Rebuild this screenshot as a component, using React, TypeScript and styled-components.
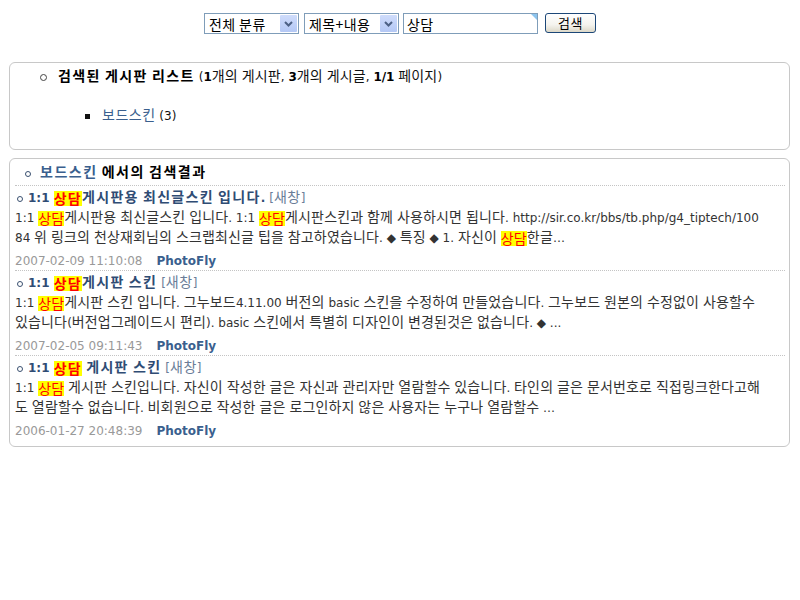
import React from 'react';
import styled, { createGlobalStyle } from 'styled-components';

const KEYWORD = '상담';

type Post = Readonly<{
    title: string;
    body: string;
    date: string;
    author: string;
}>;

const posts: Post[] = [
    {
        title: '1:1 상담게시판용 최신글스킨 입니다.',
        body:
            '1:1 상담게시판용 최신글스킨 입니다. 1:1 상담게시판스킨과 함께 사용하시면 됩니다. http://sir.co.kr/bbs/tb.php/g4_tiptech/10084 위 링크의 천상재회님의 스크랩최신글 팁을 참고하였습니다. ◆ 특징 ◆ 1. 자신이 상담한글…',
        date: '2007-02-09 11:10:08',
        author: 'PhotoFly',
    },
    {
        title: '1:1 상담게시판 스킨',
        body:
            '1:1 상담게시판 스킨 입니다. 그누보드4.11.00 버전의 basic 스킨을 수정하여 만들었습니다. 그누보드 원본의 수정없이 사용할수 있습니다(버전업그레이드시 편리). basic 스킨에서 특별히 디자인이 변경된것은 없습니다. ◆ ...',
        date: '2007-02-05 09:11:43',
        author: 'PhotoFly',
    },
    {
        title: '1:1 상담 게시판 스킨',
        body:
            '1:1 상담 게시판 스킨입니다. 자신이 작성한 글은 자신과 관리자만 열람할수 있습니다. 타인의 글은 문서번호로 직접링크한다고해도 열람할수 없습니다. 비회원으로 작성한 글은 로그인하지 않은 사용자는 누구나 열람할수 …',
        date: '2006-01-27 20:48:39',
        author: 'PhotoFly',
    },
];

const GlobalStyle = createGlobalStyle`
    body {
        margin: 8px;
        background: #fff;
        color: #333;
        font: 12px "DejaVu Sans", "Noto Sans CJK KR", sans-serif;
    }
`;

// hangul runs are set a size up, like the old Dotum/Tahoma pairing
const Hangul = styled.span`
    font-family: "Noto Sans CJK KR", sans-serif;
    font-size: 14px;
    line-height: 1;
    letter-spacing: 0.15px;
`;

const ko = (text: string) =>
    text.split(/([가-힣]+)/).map((part, i) =>
        i % 2 ? <Hangul key={i}>{part}</Hangul> : <React.Fragment key={i}>{part}</React.Fragment>,
    );

const SearchForm = styled.form`
    display: flex;
    justify-content: center;
    align-items: flex-start;
    margin: 5px 0 28px;
    height: 21px;
`;

const SelectWrap = styled.div<{ $gap: number }>`
    position: relative;
    width: 95px;
    height: 21px;
    margin-right: ${(p) => p.$gap}px;
    border: 1px solid #7f9db9;
    box-sizing: border-box;
    background: #fff;

    select {
        appearance: none;
        border: 0;
        outline: 0;
        width: 100%;
        height: 100%;
        padding: 0 0 0 4px;
        background: transparent;
        font: 14px "Noto Sans CJK KR", sans-serif;
        letter-spacing: 0.4px;
        color: #000;
    }
`;

const SelectArrow = styled.span`
    position: absolute;
    top: 1px;
    right: 1px;
    width: 17px;
    height: 17px;
    border-radius: 1px;
    background: linear-gradient(#cfdcfb, #b4c8f5);
    display: flex;
    align-items: center;
    justify-content: center;
    pointer-events: none;
`;

const InputWrap = styled.div`
    position: relative;
    width: 135px;
    height: 21px;
    margin-right: 7px;

    input {
        width: 100%;
        height: 100%;
        box-sizing: border-box;
        border: 1px solid #7f9db9;
        outline: 0;
        padding: 0 3px;
        font: 14px "Noto Sans CJK KR", sans-serif;
        letter-spacing: 0.4px;
        color: #000;
    }

    &::after {
        content: '';
        position: absolute;
        top: 1px;
        right: 1px;
        border-top: 6px solid #8cc4ee;
        border-left: 6px solid transparent;
    }
`;

const SearchButton = styled.button`
    width: 51px;
    height: 20px;
    padding: 0;
    border: 1px solid #1c4778;
    border-radius: 3px;
    background: linear-gradient(#ffffff, #f4f3ee 60%, #dcd8c8);
    font: 13px "Noto Sans CJK KR", sans-serif;
    letter-spacing: 0.5px;
    color: #000;
    line-height: 16px;
`;

const Panel = styled.div`
    margin: 0 2px 0 1px;
    border: 1px solid #c8c8c8;
    border-radius: 6px;
`;

const BoardPanel = styled(Panel)`
    padding: 4px 0 23px;
`;

const ResultPanel = styled(Panel)`
    margin-top: 8px;
    padding: 0 4px 6px 5px;
`;

const BoardList = styled.ul`
    margin: 0;
    padding: 0;
    list-style: none;
`;

const BoardHeading = styled.li`
    position: relative;
    padding-left: 48px;
    line-height: 20px;
    color: #111;

    b {
        color: #000;
    }

    b ${Hangul} {
        letter-spacing: 1.4px;
    }

    &::before {
        content: '';
        position: absolute;
        left: 30px;
        top: 7px;
        width: 5px;
        height: 5px;
        border: 1px solid #444;
        border-radius: 50%;
    }
`;

const BoardSubList = styled.ul`
    margin: 19px 0 0;
    padding: 0;
    list-style: none;
`;

const BoardItem = styled.li`
    position: relative;
    padding-left: 44px;
    line-height: 20px;

    &::before {
        content: '';
        position: absolute;
        left: 27px;
        top: 8px;
        width: 5px;
        height: 5px;
        background: #111;
    }
`;

const BoardLink = styled.a`
    color: #3a5f8e;
    text-decoration: none;

    ${Hangul} {
        letter-spacing: 0.5px;
    }
`;

const ResultHeading = styled.div`
    position: relative;
    padding: 4px 0 2px 25px;
    line-height: 20px;
    font-weight: bold;
    color: #000;
    border-bottom: 1px dotted #c4c4c4;

    ${Hangul} {
        letter-spacing: 1.5px;
    }

    &::before {
        content: '';
        position: absolute;
        left: 10px;
        top: 12px;
        width: 4px;
        height: 4px;
        border: 1px solid #3a5070;
        border-radius: 50%;
    }
`;

const BoardName = styled.span`
    color: #3a5f8e;
`;

const PostItem = styled.div`
    padding-top: 2px;
    border-bottom: 1px dotted #c4c4c4;

    &:last-child {
        border-bottom: 0;
    }
`;

const PostTitle = styled.div`
    position: relative;
    padding-left: 13px;
    line-height: 20px;

    &::before {
        content: '';
        position: absolute;
        left: 2px;
        top: 8px;
        width: 4px;
        height: 4px;
        border: 1px solid #3a5070;
        border-radius: 50%;
    }
`;

const TitleLink = styled.a`
    color: #2f4c74;
    font-weight: bold;
    text-decoration: none;

    ${Hangul} {
        letter-spacing: 1.3px;
    }
`;

const NewWindow = styled.a`
    margin-left: 4px;
    color: #6a7d98;
    text-decoration: none;

    ${Hangul} {
        letter-spacing: 0.5px;
    }
`;

const PostBody = styled.div`
    padding-right: 21px;
    line-height: 20px;
    color: #333;
    word-break: break-all;
`;

const Mark = styled.span`
    display: inline-block;
    height: 15px;
    line-height: 15px;
    vertical-align: -2px;
    background: #ffff00;
    color: #ff0000;
`;

const PostMeta = styled.div`
    margin-top: 4px;
    line-height: 18px;
`;

const PostDate = styled.span`
    color: #999;
`;

const PostAuthor = styled.span`
    margin-left: 14px;
    font-weight: bold;
    color: #3a5f8e;
`;

const highlight = (text: string) =>
    text.split(KEYWORD).map((part, i) => (
        <React.Fragment key={i}>
            {i > 0 && <Mark>{ko(KEYWORD)}</Mark>}
            {ko(part)}
        </React.Fragment>
    ));

const ChevronIcon = () => (
    <svg width="9" height="6" viewBox="0 0 9 6">
        <path d="M1 1 L4.5 4.5 L8 1" fill="none" stroke="#4d6185" strokeWidth="2" />
    </svg>
);

const App: React.FC = () => (
    <>
        <GlobalStyle />
        <SearchForm onSubmit={(e) => e.preventDefault()}>
            <SelectWrap $gap={5}>
                <select defaultValue="all">
                    <option value="all">전체 분류</option>
                </select>
                <SelectArrow>
                    <ChevronIcon />
                </SelectArrow>
            </SelectWrap>
            <SelectWrap $gap={4}>
                <select defaultValue="sc">
                    <option value="sc">제목+내용</option>
                </select>
                <SelectArrow>
                    <ChevronIcon />
                </SelectArrow>
            </SelectWrap>
            <InputWrap>
                <input type="text" defaultValue={KEYWORD} />
            </InputWrap>
            <SearchButton type="submit">검색</SearchButton>
        </SearchForm>

        <BoardPanel>
            <BoardList>
                <BoardHeading>
                    <b>{ko('검색된 게시판 리스트')}</b> (<b>1</b>
                    {ko('개의 게시판, ')}
                    <b>3</b>
                    {ko('개의 게시글, ')}
                    <b>1/1</b>
                    {ko(' 페이지)')}
                    <BoardSubList>
                        <BoardItem>
                            <BoardLink href="#">{ko('보드스킨')}</BoardLink> (3)
                        </BoardItem>
                    </BoardSubList>
                </BoardHeading>
            </BoardList>
        </BoardPanel>

        <ResultPanel>
            <ResultHeading>
                <BoardName>{ko('보드스킨')}</BoardName> {ko('에서의 검색결과')}
            </ResultHeading>
            {posts.map((post) => (
                <PostItem key={post.date}>
                    <PostTitle>
                        <TitleLink href="#">{highlight(post.title)}</TitleLink>
                        <NewWindow href="#">[{ko('새창')}]</NewWindow>
                    </PostTitle>
                    <PostBody>{highlight(post.body)}</PostBody>
                    <PostMeta>
                        <PostDate>{post.date}</PostDate>
                        <PostAuthor>{post.author}</PostAuthor>
                    </PostMeta>
                </PostItem>
            ))}
        </ResultPanel>
    </>
);

export default App;
